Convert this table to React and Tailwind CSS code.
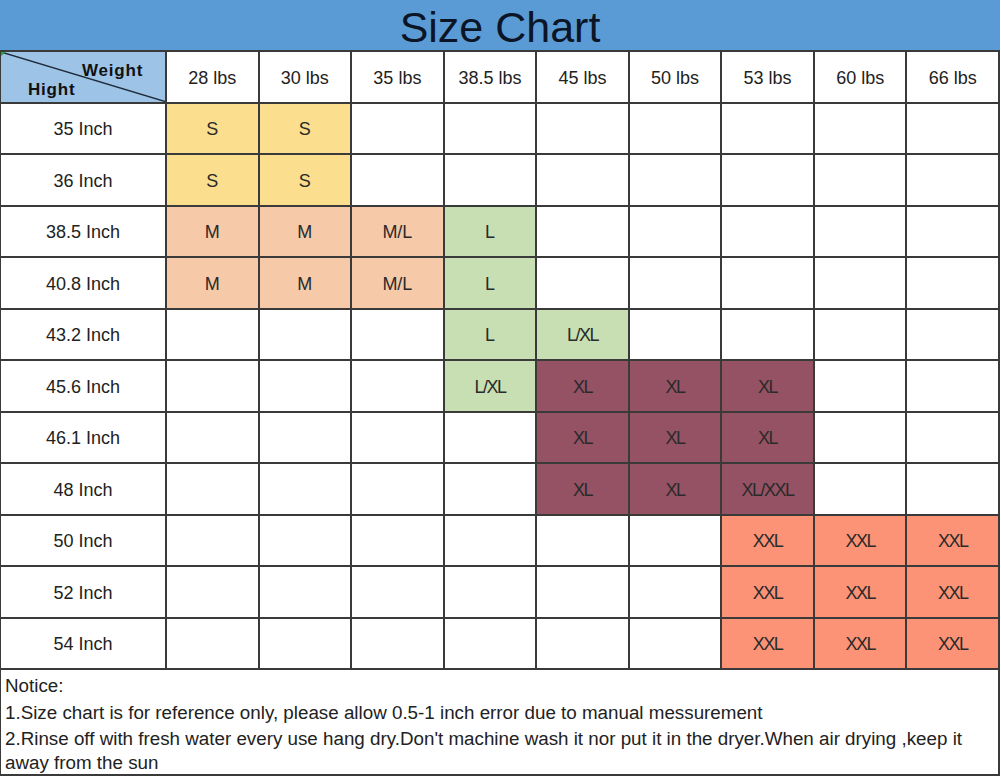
import React from "react";

const weights = ["28 lbs", "30 lbs", "35 lbs", "38.5 lbs", "45 lbs", "50 lbs", "53 lbs", "60 lbs", "66 lbs"];

const rows = [
  ["35 Inch", ["S", "S"]],
  ["36 Inch", ["S", "S"]],
  ["38.5 Inch", ["M", "M", "M/L", "L"]],
  ["40.8 Inch", ["M", "M", "M/L", "L"]],
  ["43.2 Inch", ["", "", "", "L", "L/XL"]],
  ["45.6 Inch", ["", "", "", "L/XL", "XL", "XL", "XL"]],
  ["46.1 Inch", ["", "", "", "", "XL", "XL", "XL"]],
  ["48 Inch", ["", "", "", "", "XL", "XL", "XL/XXL"]],
  ["50 Inch", ["", "", "", "", "", "", "XXL", "XXL", "XXL"]],
  ["52 Inch", ["", "", "", "", "", "", "XXL", "XXL", "XXL"]],
  ["54 Inch", ["", "", "", "", "", "", "XXL", "XXL", "XXL"]],
];

const bg = {
  S: "bg-[#fcdf8e]",
  M: "bg-[#f6c9a9]",
  "M/L": "bg-[#f6c9a9]",
  L: "bg-[#c7dfb3]",
  "L/XL": "bg-[#c7dfb3]",
  XL: "bg-[#955264]",
  "XL/XXL": "bg-[#955264]",
  XXL: "bg-[#fc9376]",
};

const font = { fontFamily: '"Liberation Sans", Arial, sans-serif' };

export default function App() {
  return (
    <div className="w-[1001px] h-[778px] bg-white overflow-hidden" style={font}>
      <div className="w-[1000px] h-[50px] bg-[#5b9bd5] flex items-center justify-center">
        <span className="text-[43px] leading-none text-[#0b1526] pt-[4px]">Size Chart</span>
      </div>
      <div className="w-[1000px] h-[620px] bg-[#3a3a3a] pt-[2px] pb-[2px] pl-[1px] pr-[2px] grid grid-cols-[164px_repeat(9,1fr)] grid-rows-[repeat(12,1fr)] gap-[2px]">
        <div className="relative bg-[#9dc3e6]">
          <svg className="absolute inset-0 w-full h-full" viewBox="0 0 164 49" preserveAspectRatio="none">
            <line x1="0" y1="0" x2="164" y2="49" stroke="#1f2a3a" strokeWidth="1.4" />
            <polygon points="0,0 5,0 0,4" fill="#2e9e3a" />
          </svg>
          <span className="absolute left-[81px] top-[6px] text-[17px] font-bold tracking-[0.8px] text-[#111]">Weight</span>
          <span className="absolute left-[27px] top-[25px] text-[17px] font-bold tracking-[0.8px] text-[#111]">Hight</span>
        </div>
        {weights.map((w) => (
          <div key={w} className="bg-white flex items-center justify-center pt-[3px] text-[18px] text-[#222]">
            {w}
          </div>
        ))}
        {rows.map(([h, cells]) => (
          <React.Fragment key={h}>
            <div className="bg-white flex items-center justify-center pt-[3px] text-[18px] text-[#222]">{h}</div>
            {Array.from({ length: 9 }).map((_, i) => {
              const v = cells[i] || "";
              return (
                <div
                  key={i}
                  className={`${v ? bg[v] : "bg-white"} flex items-center justify-center pt-[3px] text-[18px] text-[#2a2a2a] ${v.includes("X") ? "tracking-[-1.5px]" : ""}`}
                >
                  {v}
                </div>
              );
            })}
          </React.Fragment>
        ))}
      </div>
      <div className="w-[1000px] h-[106px] border-l-[1px] border-r-[2px] border-b-[2px] border-[#3a3a3a] px-[4px] pt-[2px] text-[18.8px] leading-[27px] text-[#222]">
        <div className="whitespace-nowrap">Notice:</div>
        <div className="whitespace-nowrap">1.Size chart is  for reference only, please allow 0.5-1 inch error due to manual messurement</div>
        <div className="whitespace-nowrap leading-[24px] pt-[1px]">2.Rinse off with fresh water every use hang dry.Don't machine wash it nor put it in the dryer.When air drying ,keep it</div>
        <div className="whitespace-nowrap leading-[24px]">away from the sun</div>
      </div>
    </div>
  );
}
